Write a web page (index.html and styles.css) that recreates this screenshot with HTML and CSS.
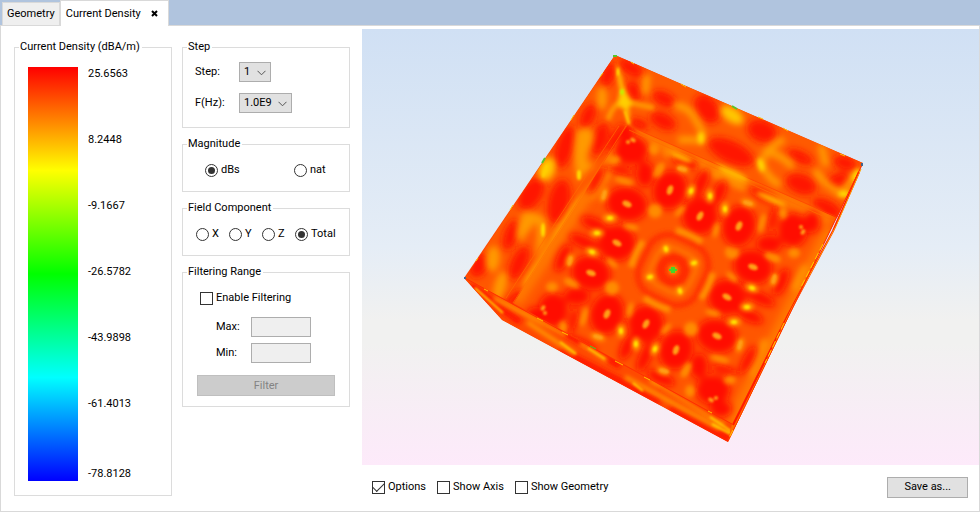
FILE: index.html
```html
<!DOCTYPE html>
<html lang="en">
<head>
<meta charset="utf-8">
<title>Current Density</title>
<link rel="stylesheet" href="styles.css">
</head>
<body>
<nav class="tabs">
  <button class="tab" type="button">Geometry</button>
  <div class="tab tab-active">
    <span>Current Density</span>
    <button class="tab-close" type="button" aria-label="Close tab">
      <svg width="7" height="7" viewBox="0 0 7 7"><path d="M1 1L6 6M6 1L1 6" stroke="#000" stroke-width="2"/></svg>
    </button>
  </div>
</nav>
<main class="panel">
  <fieldset class="group scale">
    <legend>Current Density (dBA/m)</legend>
    <div class="scale-body">
      <div class="scale-bar"></div>
      <ul class="scale-labels">
        <li>25.6563</li><li>8.2448</li><li>-9.1667</li><li>-26.5782</li><li>-43.9898</li><li>-61.4013</li><li>-78.8128</li>
      </ul>
    </div>
  </fieldset>

  <form class="settings">
    <fieldset class="group">
      <legend>Step</legend>
      <div class="step-rows">
        <label for="step">Step:</label>
        <span class="combo">
          <select id="step"><option>1</option></select>
          <svg width="9" height="6" viewBox="0 0 9 6"><path d="M.5 .8L4.5 4.8L8.5 .8" fill="none" stroke="#555"/></svg>
        </span>
        <label for="freq">F(Hz):</label>
        <span class="combo">
          <select id="freq"><option>1.0E9</option></select>
          <svg width="9" height="6" viewBox="0 0 9 6"><path d="M.5 .8L4.5 4.8L8.5 .8" fill="none" stroke="#555"/></svg>
        </span>
      </div>
    </fieldset>
    <fieldset class="group">
      <legend>Magnitude</legend>
      <div class="magnitude">
        <label class="choice"><input type="radio" name="mag" checked>dBs</label>
        <label class="choice"><input type="radio" name="mag">nat</label>
      </div>
    </fieldset>
    <fieldset class="group">
      <legend>Field Component</legend>
      <div class="component">
        <label class="choice"><input type="radio" name="comp">X</label>
        <label class="choice"><input type="radio" name="comp">Y</label>
        <label class="choice"><input type="radio" name="comp">Z</label>
        <label class="choice"><input type="radio" name="comp" checked>Total</label>
      </div>
    </fieldset>
    <fieldset class="group">
      <legend>Filtering Range</legend>
      <div class="filtering">
        <label class="choice"><input type="checkbox">Enable Filtering</label>
        <div class="range">
          <label for="max">Max:</label><input id="max" type="text" disabled>
          <label for="min">Min:</label><input id="min" type="text" disabled>
        </div>
        <button class="button" type="button" disabled>Filter</button>
      </div>
    </fieldset>
  </form>

  <section class="view">
    <div class="scene">
      <svg class="plot" viewBox="362 29 617 436" role="img" aria-label="Current density on the cube">
        <defs>
          <filter id="b1" x="-20%" y="-20%" width="140%" height="140%"><feGaussianBlur stdDeviation="1.3"/></filter>
          <filter id="b2" x="-20%" y="-20%" width="140%" height="140%"><feGaussianBlur stdDeviation="2"/></filter>
          <filter id="b3" x="-20%" y="-20%" width="140%" height="140%"><feGaussianBlur stdDeviation="3"/></filter>
          <filter id="b4" x="-20%" y="-20%" width="140%" height="140%"><feGaussianBlur stdDeviation="3.6"/></filter>
          <clipPath id="cFloor"><path d="M627 125L837 217L732 424L513 303Z"/></clipPath>
          <clipPath id="cLeft"><path d="M615 55L465 278L513 304L628 125Z"/></clipPath>
          <clipPath id="cBack"><path d="M615 55L863 163L837 218L627 125Z"/></clipPath>
          <clipPath id="cFront"><path d="M464 278L732 424L728 442L502 320Z"/></clipPath>

          <!-- one quarter of the floor pattern, repeated around the centre -->
          <g id="quarter">
            <g fill="#ff0c00" filter="url(#b4)">
              <ellipse cx="753" cy="267" rx="20" ry="17" transform="rotate(20 753 267)"/>
              <ellipse cx="727" cy="297" rx="19" ry="18"/>
              <ellipse cx="760" cy="298" rx="16" ry="6" transform="rotate(24 760 298)"/>
              <ellipse cx="717" cy="336" rx="21" ry="17" transform="rotate(15 717 336)"/>
              <ellipse cx="713" cy="390" rx="17" ry="15"/>
              <ellipse cx="721" cy="409" rx="11" ry="8"/>
              <ellipse cx="699" cy="366" rx="9" ry="13"/>
              <ellipse cx="781" cy="282" rx="6" ry="15" transform="rotate(24 781 282)"/>
              <ellipse cx="748" cy="360" rx="5" ry="16" transform="rotate(28 748 360)"/>
              <ellipse cx="750" cy="316" rx="14" ry="6" transform="rotate(24 750 316)"/>
              <ellipse cx="724" cy="370" rx="14" ry="4" transform="rotate(15 724 370)"/>
            </g>
            <g fill="#ff8c00" filter="url(#b2)">
              <ellipse cx="732" cy="252" rx="7" ry="7"/>
              <ellipse cx="774" cy="280" rx="4" ry="7" transform="rotate(20 774 280)"/>
              <ellipse cx="740" cy="345" rx="4" ry="8" transform="rotate(20 740 345)"/>
              <ellipse cx="720" cy="359" rx="10" ry="3" transform="rotate(15 720 359)"/>
              <ellipse cx="773" cy="257" rx="8" ry="3" transform="rotate(25 773 257)"/>
              <ellipse cx="713" cy="313" rx="8" ry="3" transform="rotate(15 713 313)"/>
              <ellipse cx="732" cy="277" rx="7" ry="3" transform="rotate(40 732 277)"/>
              <ellipse cx="690" cy="391" rx="5" ry="6"/>
              <ellipse cx="730" cy="380" rx="6" ry="4"/>
              <ellipse cx="686" cy="369" rx="3" ry="8" transform="rotate(25 686 369)"/>
              <path d="M713 273Q709 287 701 299" fill="none" stroke="#ff9400" stroke-width="6"/>
            </g>
            <g fill="#ffa018" filter="url(#b1)">
              <ellipse cx="753" cy="267" rx="5" ry="3" transform="rotate(20 753 267)"/>
              <ellipse cx="727" cy="297" rx="5" ry="3" transform="rotate(30 727 297)"/>
              <ellipse cx="717" cy="336" rx="5" ry="3" transform="rotate(25 717 336)"/>
              <ellipse cx="711" cy="400" rx="3" ry="2" transform="rotate(30 711 400)"/>
              <ellipse cx="716" cy="398" rx="2" ry="2"/>
              <ellipse cx="774" cy="279" rx="2" ry="5" transform="rotate(15 774 279)"/>
              <ellipse cx="740" cy="345" rx="2" ry="5" transform="rotate(15 740 345)"/>
            </g>
            <g fill="#ff9c00" filter="url(#b2)">
              <ellipse cx="752" cy="288" rx="7" ry="4" transform="rotate(20 752 288)"/>
              <ellipse cx="747" cy="307" rx="7" ry="4"/>
              <ellipse cx="734" cy="322" rx="7" ry="4"/>
              <ellipse cx="694" cy="263" rx="5" ry="4"/>
            </g>
            <g fill="#ffe400" filter="url(#b1)">
              <ellipse cx="752" cy="288" rx="3" ry="2" transform="rotate(20 752 288)"/>
              <ellipse cx="747" cy="307" rx="3" ry="2"/>
              <ellipse cx="734" cy="322" rx="3" ry="2"/>
              <ellipse cx="694" cy="263" rx="3" ry="2" transform="rotate(-15 694 263)"/>
            </g>
          </g>
        </defs>

        <path d="M615 55L863 163L728 442L502 320L464 278Z" fill="#ff4800"/>

        <g clip-path="url(#cFloor)">
          <path d="M627 125L837 217L732 424L513 303Z" fill="#ff5600"/>
          <path d="M831 230L732 424M633 131L832 220M627 133L515 301" stroke="#ff7600" stroke-width="15" filter="url(#b4)"/>
          <path d="M806 266L794 290M766 340L750 375M665 151L745 187M614 163L590 197" stroke="#ff9200" stroke-width="8" filter="url(#b3)"/>
          <g fill="none" filter="url(#b2)">
            <rect x="641" y="238" width="64" height="64" rx="22" stroke="#ff3000" stroke-width="6" transform="rotate(26 673 270)"/>
            <rect x="652" y="249" width="42" height="42" rx="15" stroke="#ff7400" stroke-width="4" transform="rotate(26 673 270)"/>
            <circle cx="673" cy="270" r="12" stroke="#ff2a00" stroke-width="9"/>
          </g>
          <use href="#quarter"/>
          <use href="#quarter" transform="rotate(90 673 270)"/>
          <use href="#quarter" transform="rotate(180 672 270)"/>
          <use href="#quarter" transform="rotate(270 673 270)"/>
          <circle cx="673" cy="270" r="4" fill="#e99a00" filter="url(#b1)"/>
          <path d="M671 267h4v2h2v2h-2v2h-4v-2h-2v-2h2z" fill="#43d52a"/>
        </g>

        <g clip-path="url(#cLeft)">
          <path d="M615 55L465 278L513 304L628 125Z" fill="#ff5800"/>
          <g fill="#ff1500" filter="url(#b4)">
            <ellipse cx="565" cy="147" rx="9" ry="22" transform="rotate(16 565 147)"/>
            <ellipse cx="531" cy="194" rx="11" ry="18" transform="rotate(34 531 194)"/>
            <ellipse cx="559" cy="202" rx="11" ry="23" transform="rotate(12 559 202)"/>
            <ellipse cx="600" cy="139" rx="8" ry="17" transform="rotate(18 600 139)"/>
            <ellipse cx="608" cy="75" rx="7" ry="13" transform="rotate(20 608 75)"/>
            <ellipse cx="617" cy="138" rx="6" ry="16" transform="rotate(28 617 138)"/>
            <ellipse cx="479" cy="265" rx="9" ry="13" transform="rotate(25 479 265)"/>
            <ellipse cx="519" cy="263" rx="8" ry="18" transform="rotate(25 519 263)"/>
            <ellipse cx="511" cy="235" rx="7" ry="16" transform="rotate(20 511 235)"/>
            <ellipse cx="588" cy="116" rx="7" ry="13" transform="rotate(25 588 116)"/>
            <ellipse cx="514" cy="299" rx="12" ry="5" transform="rotate(-40 514 299)"/>
          </g>
          <g fill="#ff9a00" filter="url(#b3)">
            <path d="M577 130Q571 158 578 182Q584 172 596 165Q582 164 590 148Q597 135 590 128Z"/>
            <path d="M523 212Q512 238 521 242Q534 224 537 222Q538 240 535 257Q549 240 546 220Q540 211 523 212Z"/>
            <path d="M604 173L559 240L552 247L541 274L523 294L524 279L543 252L556 227L573 203Z"/>
            <ellipse cx="547" cy="169" rx="8" ry="12" transform="rotate(20 547 169)" fill="#ffc800"/>
            <ellipse cx="493" cy="259" rx="7" ry="13" transform="rotate(5 493 259)"/>
            <ellipse cx="500" cy="286" rx="6" ry="15" transform="rotate(15 500 286)"/>
            <ellipse cx="602" cy="98" rx="5" ry="12"/>
          </g>
          <g fill="#ffdc00" filter="url(#b1)">
            <ellipse cx="579" cy="175" rx="2" ry="5"/><ellipse cx="543" cy="230" rx="2" ry="7"/>
            <ellipse cx="545" cy="171" rx="2" ry="7" transform="rotate(20 545 171)" fill="#ffd000"/>
            <ellipse cx="601" cy="180" rx="2" ry="6" transform="rotate(30 601 180)" fill="#ffb400"/>
            <ellipse cx="547" cy="264" rx="2" ry="6" transform="rotate(30 547 264)" fill="#ffb400"/>
          </g>
        </g>

        <g clip-path="url(#cBack)">
          <path d="M615 55L863 163L837 218L627 125Z" fill="#ff5a00"/>
          <g fill="#ff1300" filter="url(#b4)">
            <ellipse cx="631" cy="68" rx="14" ry="7" transform="rotate(32 631 68)"/>
            <ellipse cx="634" cy="91" rx="7" ry="11" transform="rotate(-25 634 91)"/>
            <ellipse cx="664" cy="99" rx="13" ry="7" transform="rotate(25 664 99)"/>
            <ellipse cx="663" cy="121" rx="14" ry="8" transform="rotate(27 663 121)"/>
            <ellipse cx="707" cy="109" rx="11" ry="16" transform="rotate(-35 707 109)"/>
            <ellipse cx="762" cy="131" rx="15" ry="11" transform="rotate(20 762 131)"/>
            <ellipse cx="731" cy="152" rx="25" ry="11" transform="rotate(25 731 152)"/>
            <ellipse cx="801" cy="184" rx="16" ry="10" transform="rotate(20 801 184)"/>
            <ellipse cx="800" cy="157" rx="14" ry="6" transform="rotate(25 800 157)"/>
            <ellipse cx="845" cy="163" rx="12" ry="7" transform="rotate(15 845 163)"/>
            <ellipse cx="838" cy="180" rx="12" ry="7" transform="rotate(-20 838 180)"/>
            <ellipse cx="827" cy="208" rx="16" ry="8" transform="rotate(28 827 208)"/>
            <ellipse cx="639" cy="124" rx="10" ry="5" transform="rotate(20 639 124)"/>
          </g>
          <g filter="url(#b3)">
            <path d="M674 105Q690 107 695 119Q706 135 701 141Q695 139 678 140M647 75L645 94M784 139Q762 151 762 165Q768 179 780 185M821 145L826 166M815 170Q825 187 843 194L856 174M763 151Q780 153 793 167" fill="none" stroke="#ff9d00" stroke-width="7"/>
            <ellipse cx="732" cy="115" rx="13" ry="7" transform="rotate(35 732 115)" fill="#ffc800"/>
            <path d="M633 137L699 166L750 190L820 215" fill="none" stroke="#ff8400" stroke-width="7"/>
          </g>
          <g fill="#ffdf00" filter="url(#b2)">
            <ellipse cx="701" cy="138" rx="3" ry="6"/><ellipse cx="761" cy="165" rx="3" ry="7" transform="rotate(-15 761 165)"/>
            <ellipse cx="844" cy="194" rx="6" ry="3"/><ellipse cx="856" cy="175" rx="3" ry="7" transform="rotate(24 856 175)"/>
            <ellipse cx="720" cy="167" rx="7" ry="2" transform="rotate(23 720 167)" fill="#ffb000"/>
          </g>
        </g>

        <g filter="url(#b2)">
          <path d="M623 101Q612 105 608 120M623 101Q640 105 654 108" fill="none" stroke="#ff9c00" stroke-width="5"/>
          <path d="M617 66L618 77L621 90L618 105L625 109L629 124L628 107L632 104L626 94L622 84L620 75Z" fill="#ffcf00" stroke="#ffc000" stroke-width="2"/>
        </g>
        <g filter="url(#b1)">
          <ellipse cx="618" cy="72" rx="1" ry="4" fill="#fff000"/>
          <ellipse cx="622" cy="92" rx="2" ry="3" fill="#c2f000"/>
          <path d="M625 111L629 124" stroke="#ffcf00" stroke-width="2"/>
        </g>
        <path d="M627 125L837 217" stroke="#ff4400" opacity=".7"/>
        <path d="M629 130L834 221M626 126L513 303M619 126L506 298" stroke="#ff6c00" fill="none" opacity=".7"/>
        <g filter="url(#b2)" fill="#ffb400">
          <ellipse cx="681" cy="157" rx="12" ry="3" transform="rotate(24 681 157)"/>
          <ellipse cx="733" cy="174" rx="16" ry="4" transform="rotate(24 733 174)"/>
          <ellipse cx="771" cy="199" rx="16" ry="3" transform="rotate(24 771 199)"/>
        </g>

        <g clip-path="url(#cFront)">
          <path d="M464 278L732 424L728 442L502 320Z" fill="#ff4a00"/>
          <g fill="none">
            <path d="M471 286L520 322M545 320L620 366M560 350L660 402M660 385L720 420M670 408L730 440" stroke="#ff1800" stroke-width="7" filter="url(#b2)"/>
            <path d="M494 298L523 313L566 335M527 322L575 354M580 343L607 361M625 377L720 429M650 380L724 425" stroke="#ff9800" stroke-width="4" filter="url(#b2)"/>
            <path d="M475 288L503 313M560 342L576 354M588 348L605 359M633 383L643 391M710 417L731 431M712 424L731 434" stroke="#ffd000" stroke-width="2" filter="url(#b1)"/>
          </g>
        </g>
        <path d="M465 278L732 424" stroke="#ff2a00" opacity=".8"/>
        <path d="M484 289L488 291M537 318L543 321M562 332L568 335M615 361L623 365M644 377L650 380M708 411L712 413" stroke="#ffc400"/>
        <path d="M590 346L596 349" stroke="#37d52a"/>

        <path d="M863 163L728 442L732 424L837 217Z" fill="#ff6c00"/>
        <path d="M859 172L833 231L788 315L733 425" stroke="#ff1900" stroke-width="2" fill="none"/>
        <path d="M861 169L836 226L792 308L730 437" stroke="#ffa000" fill="none"/>
        <path d="M862 165L728 441" stroke="#ff2e00"/>
        <path d="M823 244L800 289M784 323L765 363M733 430L729 438" stroke="#ffcd00" stroke-dasharray="7 3"/>
        <path d="M603 73L600 77M574 115L571 120M513 205L510 210M478 258L476 261M631 62L634 64M681 84L686 87M758 117L763 119M783 128L788 131M840 154L845 156" stroke="#ffbd00"/>
        <path d="M542 163L545 158M732 106L737 109M613 56h4" stroke="#58c528" stroke-width="2"/>
        <path d="M464 278h2M862 163v3" stroke="#45658c" stroke-width="2"/>
      </svg>
    </div>
    <div class="toolbar">
      <label class="choice"><input type="checkbox" checked>Options</label>
      <label class="choice"><input type="checkbox">Show Axis</label>
      <label class="choice"><input type="checkbox">Show Geometry</label>
      <button class="button save" type="button">Save as...</button>
    </div>
  </section>
</main>
</body>
</html>
```
FILE: styles.css
```css
* { box-sizing: border-box; }

body {
  margin: 0;
  min-height: 100vh;
  display: flex;
  flex-direction: column;
  background: #b0c4de;
  color: #000;
  font: 11px/14px Roboto, sans-serif;
}

button, input, select { font: inherit; color: inherit; margin: 0; }

.tabs { display: flex; align-items: flex-end; height: 25px; padding-left: 2px; }

.tab {
  height: 23px;
  padding: 0 4px;
  border: 1px solid #d9d9d9;
  border-bottom: 0;
  background: #efefef;
  white-space: nowrap;
}

.tab-active {
  display: flex;
  align-items: center;
  gap: 10px;
  height: 26px;
  margin-bottom: -1px;
  padding: 0 10px 0 5px;
  background: #fff;
  position: relative;
}

.tab-close { display: flex; padding: 0; border: 0; background: none; }

.panel {
  flex: 1;
  display: grid;
  grid-template-columns: 158px 168px 1fr;
  column-gap: 10px;
  padding: 3px 0 0 13px;
  background: #fff;
  border: 1px solid #d9d9d9;
}

.group { min-width: 0; margin: 0; padding: 0; border: 1px solid #dcdcdc; }
.group legend { margin-left: 4px; padding: 0 2px 0 1px; white-space: nowrap; }

.scale { display: flex; margin: 11px 0 15px; }
.scale-body { display: flex; gap: 10px; height: 100%; padding: 13px 13px 14px; }
.scale-bar {
  width: 50px;
  background: linear-gradient(#f00, #ff0 25%, #0f0 50%, #0ff 75%, #00f);
}
.scale-labels { display: flex; flex-direction: column; margin: 0; padding: 0; list-style: none; }
.scale-labels li { flex: 66 0 0; }
.scale-labels li:last-child { flex-grow: 18; display: flex; align-items: flex-end; }

.settings { display: flex; flex-direction: column; gap: 9px; padding-top: 11px; }

.step-rows {
  display: grid;
  grid-template-columns: 44px 1fr;
  row-gap: 11px;
  align-items: center;
  padding: 8px 12px 14px;
}
.combo {
  justify-self: start;
  display: flex;
  align-items: center;
  position: relative;
}
.combo select {
  appearance: none;
  height: 20px;
  padding: 0 19px 0 4px;
  border: 1px solid #adadad;
  border-radius: 0;
  background: #e1e1e1;
}
.combo svg { position: absolute; right: 5px; top: 8px; pointer-events: none; }

.choice { display: flex; align-items: center; gap: 3px; white-space: nowrap; }

.choice input {
  appearance: none;
  flex: none;
  display: grid;
  place-items: center;
  width: 13px;
  height: 13px;
  border: 1px solid #333;
  background: #fff;
}
.choice input[type="radio"] { border-radius: 50%; }
.choice input[type="radio"]:checked::before {
  content: "";
  width: 7px;
  height: 7px;
  border-radius: 50%;
  background: #333;
}
.choice input[type="checkbox"]:checked::before {
  content: "";
  width: 10px;
  height: 5px;
  margin-bottom: 3px;
  border: solid #333;
  border-width: 0 0 1px 1px;
  transform: rotate(-45deg);
}

.magnitude { display: grid; grid-template-columns: 89px 1fr; padding: 12px 22px 14px; }
.component { display: grid; grid-template-columns: 33px 33px 33px 1fr; padding: 12px 13px 14px; }

.filtering { display: flex; flex-direction: column; padding: 12px 14px 10px; }
.filtering .choice { padding-left: 3px; }
.range {
  display: grid;
  grid-template-columns: 35px 60px;
  row-gap: 6px;
  align-items: center;
  padding: 12px 19px;
}
.range input { width: 60px; height: 20px; border: 1px solid #adadad; background: #efefef; }

.button {
  height: 21px;
  padding: 0 16px;
  border: 1px solid #adadad;
  background: #e1e1e1;
}
.button:disabled { border-color: #bfbfbf; background: #ccc; color: #838383; }

.view { display: flex; flex-direction: column; margin-left: 2px; }
.scene {
  flex: 1;
  display: flex;
  background: linear-gradient(#d0e0f4, #e5edf6 50%, #f1f1f0 67%, #f1f1f0 72%, #fdeafa);
}
.plot { display: block; width: 100%; height: 100%; }

.toolbar { display: flex; align-items: center; gap: 11px; height: 46px; padding: 0 11px 2px 10px; }
.save { margin-left: auto; }
```
